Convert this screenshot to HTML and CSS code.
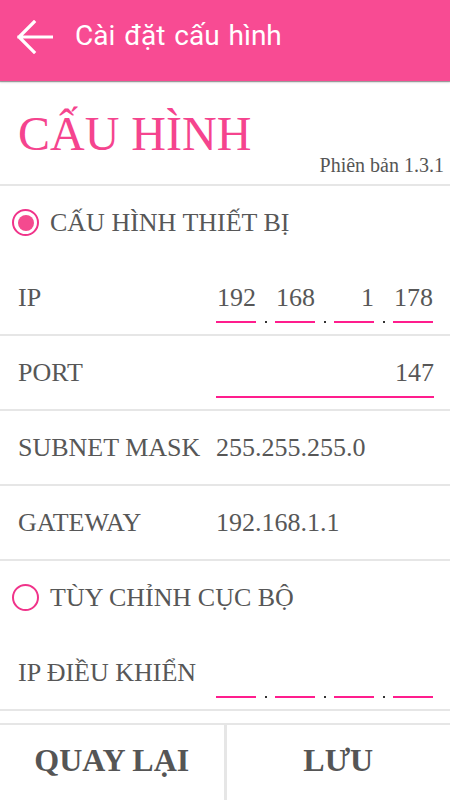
FILE: index.html
```html
<!DOCTYPE html>
<html lang="vi">
<head>
<meta charset="utf-8">
<link rel="stylesheet" href="styles.css">
</head>
<body>
<div class="app">
  <header class="appbar">
    <svg class="back" width="36" height="34" viewBox="0 0 36 34"><path d="M2 17H35M17 2L2 17L17 32" fill="none" stroke="#fff" stroke-width="3.2" stroke-linecap="square"/></svg>
    <span class="appbar-title">Cài đặt cấu hình</span>
  </header>
  <main class="content">
    <section class="title-block">
      <h1 class="title">CẤU HÌNH</h1>
      <div class="version">Phiên bản 1.3.1</div>
    </section>
    <div class="radio-row">
      <span class="radio checked"></span>
      <span class="radio-label">CẤU HÌNH THIẾT BỊ</span>
    </div>
    <div class="row">
      <span class="label">IP</span>
      <div class="ip">
        <span class="seg">192</span><span class="dot"></span>
        <span class="seg">168</span><span class="dot"></span>
        <span class="seg">1</span><span class="dot"></span>
        <span class="seg">178</span>
      </div>
    </div>
    <div class="row">
      <span class="label">PORT</span>
      <span class="field">147</span>
    </div>
    <div class="row">
      <span class="label">SUBNET MASK</span>
      <span class="value">255.255.255.0</span>
    </div>
    <div class="row">
      <span class="label">GATEWAY</span>
      <span class="value">192.168.1.1</span>
    </div>
    <div class="radio-row">
      <span class="radio"></span>
      <span class="radio-label">TÙY CHỈNH CỤC BỘ</span>
    </div>
    <div class="row">
      <span class="label">IP ĐIỀU KHIỂN</span>
      <div class="ip">
        <span class="seg">&nbsp;</span><span class="dot"></span>
        <span class="seg">&nbsp;</span><span class="dot"></span>
        <span class="seg">&nbsp;</span><span class="dot"></span>
        <span class="seg">&nbsp;</span>
      </div>
    </div>
  </main>
  <footer class="actions">
    <button class="btn">QUAY LẠI</button>
    <button class="btn">LƯU</button>
  </footer>
</div>
</body>
</html>
```
FILE: styles.css
```css
* { box-sizing: border-box; }
html, body { margin: 0; padding: 0; }
body {
  width: 450px;
  height: 800px;
  background: #fff;
  font-family: "Liberation Serif", "DejaVu Serif", serif;
  color: #575757;
  overflow: hidden;
}
.app {
  height: 800px;
  display: flex;
  flex-direction: column;
}
.appbar {
  height: 81px;
  flex: none;
  background: #f84b93;
  display: flex;
  align-items: center;
  padding-left: 17px;
  padding-bottom: 8px;
  box-shadow: 0 1px 1px rgba(0,0,0,0.35), 0 2px 2px rgba(0,0,0,0.08);
  position: relative;
  z-index: 1;
}
.back { flex: none; }
.appbar-title {
  margin-left: 22px;
  color: #fff;
  font-family: Roboto, "Noto Sans", sans-serif;
  font-size: 28px;
  word-spacing: 2px;
  margin-top: -2px;
}
.content {
  flex: 1;
  overflow: hidden;
}
.title-block {
  height: 105px;
  border-bottom: 2px solid #e6e6e6;
  padding: 29px 6px 0 18px;
}
.title {
  margin: 0;
  font-weight: normal;
  font-size: 48px;
  line-height: 48px;
  color: #f5448e;
}
.version {
  text-align: right;
  font-size: 20px;
  line-height: 20px;
  margin-top: -3px;
  color: #555;
}
.radio-row {
  height: 75px;
  display: flex;
  align-items: flex-start;
  padding: 22px 0 0 12px;
}
.radio {
  width: 27px;
  height: 27px;
  margin-top: 1px;
  border: 2px solid #f0338a;
  border-radius: 50%;
  flex: none;
  display: flex;
  align-items: center;
  justify-content: center;
}
.radio.checked::after {
  content: "";
  width: 16px;
  height: 16px;
  border-radius: 50%;
  background: #f44a8f;
}
.radio-label {
  margin-left: 11px;
  font-size: 26px;
  line-height: 30px;
}
.row {
  height: 75px;
  border-bottom: 2px solid #e6e6e6;
  display: flex;
  align-items: baseline;
  padding: 22px 16px 0 18px;
  font-size: 26px;
  line-height: 30px;
}
.label { flex: none; width: 198px; }
.value { flex: 1; }
.field {
  flex: 1;
  text-align: right;
  border-bottom: 2px solid #ff1d8d;
  padding-bottom: 8px;
}
.ip {
  flex: none;
  display: flex;
  align-items: baseline;
}
.seg {
  width: 40px;
  text-align: right;
  border-bottom: 2px solid #ff1d8d;
  padding-bottom: 8px;
}
.dot {
  width: 2px;
  height: 2px;
  background: #333;
  margin: 0 8px 0 9px;
  align-self: flex-end;
}
.actions {
  flex: none;
  height: 77px;
  border-top: 2px solid #e6e6e6;
  display: flex;
}
.btn {
  flex: 1;
  border: none;
  background: #fff;
  font-family: "Liberation Serif", serif;
  font-weight: bold;
  font-size: 32px;
  color: #555;
  padding: 0 0 4px;
}
.btn + .btn { border-left: 3px solid #e6e6e6; }
```
